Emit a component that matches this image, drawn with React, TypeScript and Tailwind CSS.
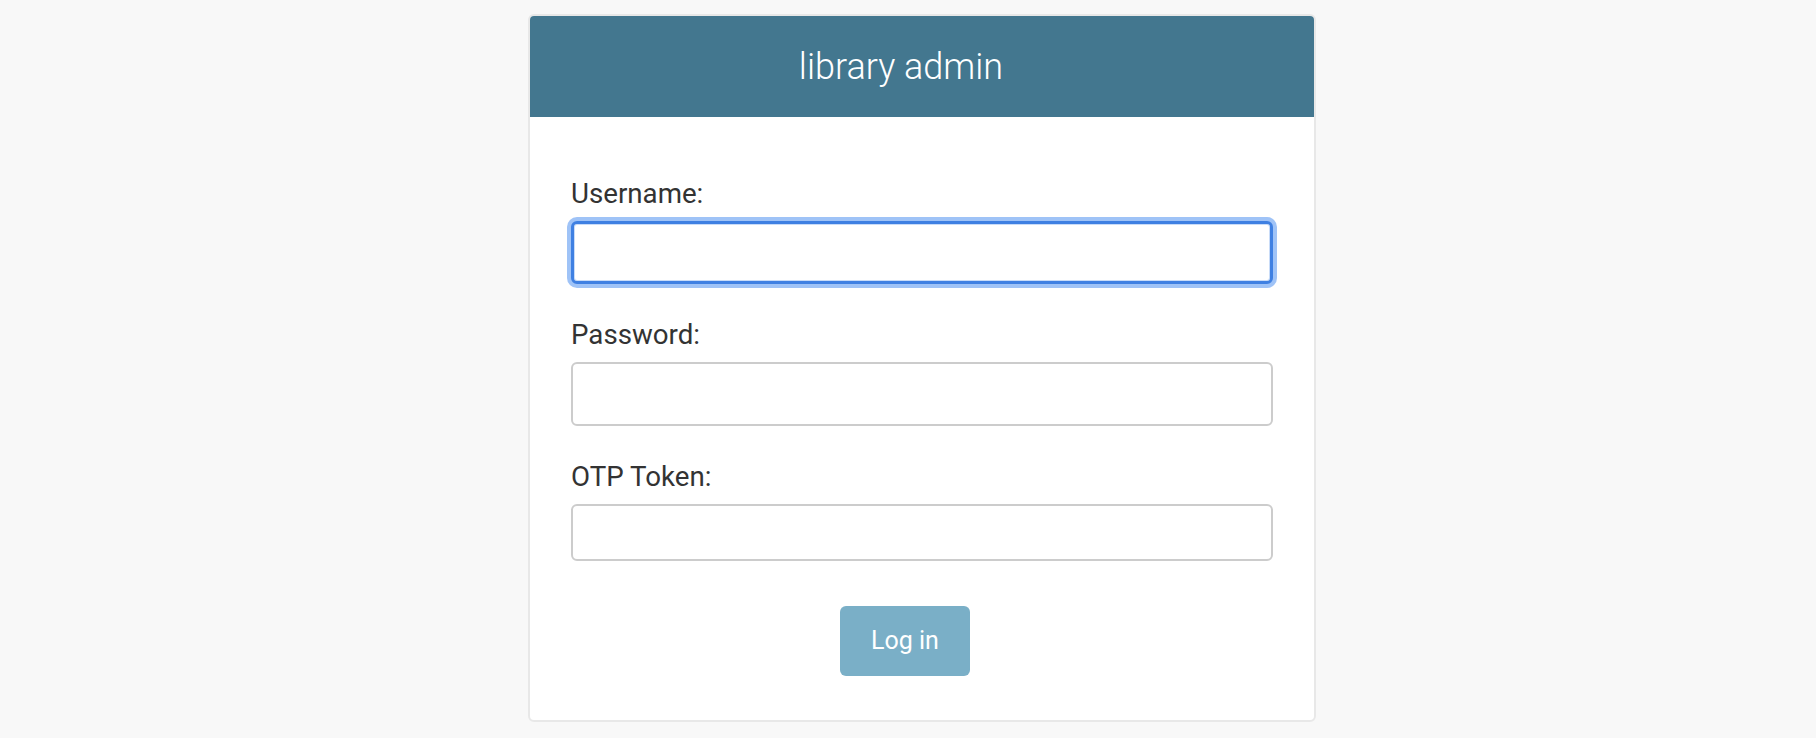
import React, { useEffect, useRef } from "react";

type FieldProps = {
  label: string;
  type?: string;
  inputClass: string;
  inputRef?: React.Ref<HTMLInputElement>;
};

function Field({ label, type = "text", inputClass, inputRef }: FieldProps) {
  return (
    <div className="flex w-full flex-col">
      <label className="text-[27.7px] leading-[54px] text-[#333333]">{label}</label>
      <input ref={inputRef} type={type} className={inputClass} />
    </div>
  );
}

function App() {
  const userRef = useRef<HTMLInputElement>(null);

  useEffect(() => {
    userRef.current?.focus();
  }, []);

  return (
    <div
      className="flex min-h-[738px] w-full justify-center bg-[#f8f8f8] pl-[28px] pt-[14px]"
      style={{ fontFamily: "Roboto, 'Noto Sans', sans-serif" }}
    >
      <div className="flex h-[708px] w-[788px] flex-col overflow-hidden rounded-[6px] border-2 border-[#e8e8e8] bg-white">
        <div className="flex h-[101px] w-full items-center justify-center bg-[#43778f] pr-[42px]">
          <h1 className="text-[36px] font-light text-white">library admin</h1>
        </div>
        <form
          className="flex flex-col px-[41px] pt-[50px]"
          onSubmit={(e) => e.preventDefault()}
        >
          <Field
            label="Username:"
            inputRef={userRef}
            inputClass="h-[63px] w-full rounded-[6px] border-[3px] border-[#3f80e2] bg-white px-3 text-[24px] outline-none shadow-[0_0_0_4px_#9fc3f7,inset_0_0_0_1px_#c9dcf8]"
          />
          <div className="h-[24px]" />
          <Field
            label="Password:"
            type="password"
            inputClass="h-[64px] w-full rounded-[6px] border-2 border-[#cccccc] bg-white px-3 text-[24px] outline-none"
          />
          <div className="h-[24px]" />
          <Field
            label="OTP Token:"
            inputClass="h-[57px] w-full rounded-[6px] border-2 border-[#cccccc] bg-white px-3 text-[24px] outline-none"
          />
          <div className="flex w-full justify-center pr-[34px] pt-[45px]">
            <button
              type="submit"
              className="h-[70px] w-[130px] rounded-[6px] bg-[#7aafc7] text-[25px] text-white"
            >
              Log in
            </button>
          </div>
        </form>
      </div>
    </div>
  );
}

export default App;
